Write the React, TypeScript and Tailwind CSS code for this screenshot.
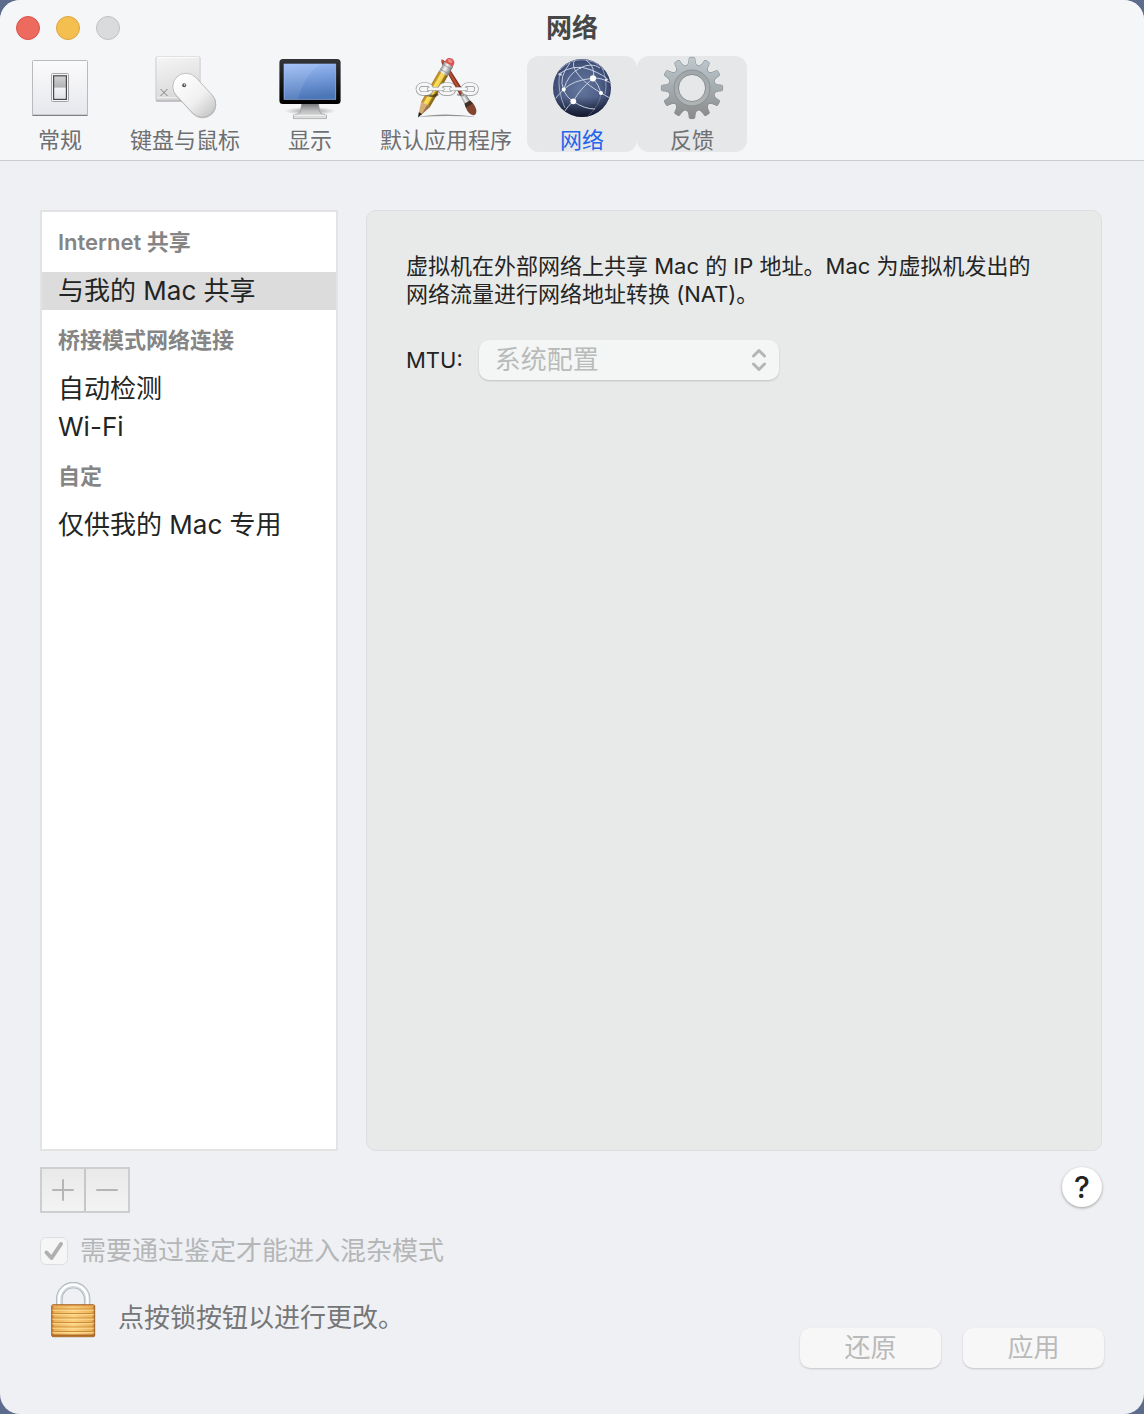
import type { ReactNode } from "react";

const gearTeeth = [0, 30, 60, 90, 120, 150, 180, 210, 240, 270, 300, 330];
const lockStripes = [27, 31.5, 36, 40.5, 45, 49.5];

function SwitchIcon() {
  return (
    <svg viewBox="0 0 64 64" className="size-16" aria-hidden="true">
      <defs>
        <linearGradient id="plate" x1="0" y1="0" x2="0" y2="1">
          <stop offset="0" stopColor="#fbfbfc" />
          <stop offset="1" stopColor="#e6e7ec" />
        </linearGradient>
        <linearGradient id="rocker" x1="0" y1="0" x2="0" y2="1">
          <stop offset="0" stopColor="#d3d3d5" />
          <stop offset="0.48" stopColor="#b2b3b6" />
          <stop offset="0.52" stopColor="#f3f4f7" />
          <stop offset="1" stopColor="#dfe1e6" />
        </linearGradient>
      </defs>
      <rect x="4.5" y="4.5" width="55" height="55" rx="1" fill="url(#plate)" stroke="#b9babd" />
      <path d="M4.5 59.3h55" stroke="#7f8083" strokeWidth="1.2" />
      <rect x="23.5" y="17.5" width="17" height="28" rx="1" fill="#f4f4f4" stroke="#a5a5a7" />
      <rect x="25.6" y="19.8" width="12.8" height="23.6" fill="url(#rocker)" stroke="#4a4a4c" strokeWidth="1.2" />
    </svg>
  );
}

function KeyMouseIcon() {
  return (
    <svg viewBox="0 0 64 64" className="size-16" aria-hidden="true">
      <defs>
        <linearGradient id="key" x1="0" y1="0" x2="0.3" y2="1">
          <stop offset="0" stopColor="#f6f6f6" />
          <stop offset="1" stopColor="#d9d9da" />
        </linearGradient>
        <linearGradient id="mouse" x1="0" y1="0" x2="0" y2="1">
          <stop offset="0" stopColor="#ffffff" />
          <stop offset="0.6" stopColor="#f0f0f0" />
          <stop offset="1" stopColor="#c8c8c8" />
        </linearGradient>
      </defs>
      <rect x="2.8" y="1" width="44.4" height="44.8" rx="1.5" fill="#b4b4b6" />
      <rect x="3" y="0.5" width="44" height="43.5" rx="1.5" fill="url(#key)" stroke="#cbcbcd" strokeWidth="0.8" />
      <path d="M4 1.2h42" stroke="#ffffff" />
      <path d="M4 41.5h42" stroke="#f3f3f3" strokeWidth="0.8" />
      <path d="M7.500 33l7 7M14.500 33l-7 7" stroke="#747476" strokeWidth="0.9" />
      <rect x="28" y="15" width="27" height="50.6" rx="13.5" transform="rotate(-43 41.3 40)" fill="#8f8f8f" opacity="0.5" />
      <rect x="28" y="14" width="26.6" height="50.6" rx="13.3" transform="rotate(-43 41.3 39.3)" fill="url(#mouse)" stroke="#adadad" strokeWidth="0.7" />
      <circle cx="31.2" cy="29.2" r="2" fill="#55565a" />
      <circle cx="31.6" cy="28.9" r="0.8" fill="#e5e5e5" />
    </svg>
  );
}

function DisplayIcon() {
  return (
    <svg viewBox="0 0 64 64" className="size-16" aria-hidden="true">
      <defs>
        <linearGradient id="screen" x1="0" y1="0" x2="0.15" y2="1">
          <stop offset="0" stopColor="#9dbdf8" />
          <stop offset="1" stopColor="#4b76b8" />
        </linearGradient>
        <linearGradient id="stand" x1="0" y1="0" x2="0" y2="1">
          <stop offset="0" stopColor="#707172" />
          <stop offset="0.5" stopColor="#bcbdbe" />
          <stop offset="1" stopColor="#e4e4e4" />
        </linearGradient>
        <linearGradient id="bezel" x1="0" y1="0" x2="0" y2="1">
          <stop offset="0" stopColor="#333536" />
          <stop offset="0.7" stopColor="#0d0d0e" />
          <stop offset="1" stopColor="#000000" />
        </linearGradient>
        <radialGradient id="standShade">
          <stop offset="0" stopColor="#000000" stopOpacity="0.4" />
          <stop offset="1" stopColor="#000000" stopOpacity="0" />
        </radialGradient>
      </defs>
      <ellipse cx="32" cy="55" rx="26" ry="4" fill="url(#standShade)" />
      <path d="M23.800 47h16.600l1 7.500q.4 3 3.200 3.700l3.900 1v3.400h-33v-3.400l3.900-1q2.800-.7 3.300-3.700z" fill="url(#stand)" stroke="#8b8c8d" strokeWidth="0.6" />
      <path d="M16 59.300h32" stroke="#ffffff" strokeWidth="0.8" />
      <rect x="1.4" y="3" width="61.2" height="45" rx="3.5" fill="url(#bezel)" />
      <rect x="6" y="8" width="51.8" height="35.3" fill="url(#screen)" />
      <path d="M6 8h36c-10 7-18 20-22 35.300H6z" fill="#ffffff" opacity="0.09" />
      <rect x="6" y="8" width="51.8" height="35.3" fill="none" stroke="#a6c4ff" strokeWidth="0.6" />
    </svg>
  );
}

function DefaultAppsIcon() {
  return (
    <svg viewBox="0 0 64 64" className="size-16 overflow-visible" aria-hidden="true">
      <defs>
        <linearGradient id="metal" x1="0" y1="0" x2="1" y2="0">
          <stop offset="0" stopColor="#8f9193" />
          <stop offset="0.4" stopColor="#f7f7f7" />
          <stop offset="1" stopColor="#77797b" />
        </linearGradient>
        <linearGradient id="pencil" x1="0" y1="0" x2="1" y2="0">
          <stop offset="0" stopColor="#a8761c" />
          <stop offset="0.25" stopColor="#d9a934" />
          <stop offset="0.32" stopColor="#f9e46a" />
          <stop offset="0.65" stopColor="#f2d247" />
          <stop offset="0.75" stopColor="#a98022" />
          <stop offset="1" stopColor="#7a5a14" />
        </linearGradient>
        <linearGradient id="brush" x1="0" y1="0" x2="1" y2="0">
          <stop offset="0" stopColor="#6d1d0c" />
          <stop offset="0.5" stopColor="#c2563a" />
          <stop offset="1" stopColor="#5e1507" />
        </linearGradient>
      </defs>
      <path d="M4 61q12-2.500 28-2.500t31 2.500q-14-1-29-1t-30 1z" fill="#77797b" opacity="0.8" />
      <g transform="translate(61 59) rotate(-31)">
        <path d="M-2.700-24L-1.800-58q-1-4 1.800-7q2.600 3 1.800 7L2.700-24z" fill="url(#brush)" />
        <path d="M-3.200-15L-2.700-25h5.400l.5 10z" fill="url(#metal)" />
        <path d="M-3.200-15h6.400Q5.500-9 3.700-3.500Q1.500 1-1.500-.5Q-5.500-4-4.200-10z" fill="#84452f" />
        <path d="M-3.200-15h6.400l.9 4h-8.200z" fill="#40302a" />
      </g>
      <g transform="translate(4 61.500) rotate(30)">
        <rect x="-4.600" y="-68" width="9.200" height="12" rx="4.400" fill="#dc5350" />
        <ellipse cx="-.5" cy="-65" rx="2.600" ry="1.700" fill="#f08a84" />
        <rect x="-5" y="-61.500" width="10" height="11.500" fill="url(#metal)" />
        <path d="M-5-58.500h10M-5-53h10" stroke="#808284" strokeWidth="0.6" />
        <path d="M-5.100-15V-50.500H5.100V-15z" fill="url(#pencil)" />
        <path d="M-5.100-15q1.700-2 3.400 0q1.700-2 3.400 0q1.700-2 3.400 0L1.500-4h-3z" fill="#d6ad78" />
        <path d="M1.700-15q1.700-2 3.400 0L1.500-4z" fill="#9d7444" />
        <path d="M-1.900-5h3.800L0 0z" fill="#1c1c1c" />
      </g>
      <path d="M12 38.500q8 3 12-.5" stroke="#2a2413" strokeWidth="2.500" fill="none" opacity="0.6" />
      <path d="M43 38.500l7 1" stroke="#2a1413" strokeWidth="2" fill="none" opacity="0.4" />
      <g fill="none" stroke="#8c8e8f" strokeWidth="4.200">
        <rect x="3.800" y="28.600" width="13.600" height="9" rx="4.500" />
        <rect x="26" y="28.600" width="14" height="9" rx="4.500" />
        <rect x="49" y="28.600" width="13.600" height="9" rx="4.500" />
        <path d="M15 33h13.500M37.500 33H52" strokeLinecap="round" />
      </g>
      <g fill="none" stroke="#f6f6f6" strokeWidth="3">
        <rect x="3.800" y="28.600" width="13.600" height="9" rx="4.500" />
        <rect x="26" y="28.600" width="14" height="9" rx="4.500" />
        <rect x="49" y="28.600" width="13.600" height="9" rx="4.500" />
        <path d="M15 33h13.500M37.500 33H52" strokeLinecap="round" />
      </g>
      <path d="M15 34.600h13.500M37.500 34.600H52" stroke="#a2a4a5" strokeWidth="0.7" />
    </svg>
  );
}

function GlobeIcon() {
  return (
    <svg viewBox="0 0 64 64" className="size-16" aria-hidden="true">
      <defs>
        <radialGradient id="globe" cx="0.48" cy="0.5" r="0.54">
          <stop offset="0" stopColor="#64779e" />
          <stop offset="0.6" stopColor="#4f6089" />
          <stop offset="0.9" stopColor="#3a4870" />
          <stop offset="1" stopColor="#242e50" />
        </radialGradient>
        <linearGradient id="globeShade" x1="0" y1="0" x2="0" y2="1">
          <stop offset="0.65" stopColor="#0b1022" stopOpacity="0" />
          <stop offset="1" stopColor="#0b1022" stopOpacity="0.85" />
        </linearGradient>
        <clipPath id="globeClip">
          <circle cx="32" cy="32" r="28.500" />
        </clipPath>
      </defs>
      <circle cx="32" cy="32" r="29" fill="url(#globe)" />
      <circle cx="32" cy="32" r="29" fill="url(#globeShade)" />
      <g clipPath="url(#globeClip)" fill="none" stroke="#d3dbea" strokeWidth="0.9">
        <path d="M25 4Q21 9 27 17Q34 27 51 37T62 42" />
        <path d="M43 22.300Q49 29 51 37" />
        <path d="M43 22.300Q46 11 36 4" />
        <path d="M8 18.500Q24 7 40 13.500T58 24" />
        <path d="M43 22.300Q50 21 61 27" />
        <path d="M43 22.300Q23 24 13.700 33.500T5 44" />
        <path d="M43 22.300Q30 33 23.300 45.300Q18 50 14 56" />
        <path d="M13.700 33.500Q16 41 23.300 45.300Q34 53 45 53" />
        <path d="M13.700 33.500Q8 22 20 7" />
        <path d="M9.500 18Q7 34 15 52" strokeOpacity="0.7" />
        <path d="M13.700 33.500Q18 18 30 12T50 12" />
        <path d="M51 37Q50 49 38 60" strokeOpacity="0.3" />
        <path d="M52 12q6 12 3 26" strokeOpacity="0.6" />
      </g>
      <circle cx="43" cy="22.300" r="3.100" fill="#ffffff" />
      <circle cx="23.300" cy="45.300" r="2.900" fill="#ffffff" />
      <circle cx="13.700" cy="33.500" r="2" fill="#ffffff" />
      <circle cx="51" cy="37" r="2" fill="#ffffff" />
      <circle cx="56" cy="24" r="1.100" fill="#ffffff" />
      <circle cx="30" cy="12" r="1.100" fill="#d3dbeb" />
      <circle cx="10.500" cy="18.500" r="1.300" fill="#d3dbeb" />
      <path d="M10 14Q19 3.800 32 3.800t22 10.200" fill="none" stroke="#b9c6df" strokeWidth="1" opacity="0.6" />
    </svg>
  );
}

function GearIcon() {
  return (
    <svg viewBox="0 0 64 64" className="size-16" aria-hidden="true">
      <defs>
        <linearGradient id="gear" gradientUnits="userSpaceOnUse" x1="0" y1="1" x2="0" y2="63">
          <stop offset="0" stopColor="#bfcacf" />
          <stop offset="0.5" stopColor="#a5acaf" />
          <stop offset="1" stopColor="#898989" />
        </linearGradient>
        <linearGradient id="gearRing" x1="0" y1="0" x2="0" y2="1">
          <stop offset="0" stopColor="#9fa7aa" />
          <stop offset="1" stopColor="#b0b3b4" />
        </linearGradient>
        <mask id="gearHole">
          <rect width="64" height="64" fill="#ffffff" />
          <circle cx="32" cy="32" r="13.300" fill="#000000" />
        </mask>
        <g id="gearShape">
          <circle cx="32" cy="32" r="23" />
          {gearTeeth.map((angle) => (
            <path key={angle} d="M26.500 10Q28.900 8.500 29.200 2.700Q29.300 1.400 30.400 1.400h3.200Q34.700 1.400 34.800 2.700Q35.100 8.500 37.500 10z" transform={`rotate(${angle} 32 32)`} />
          ))}
        </g>
        <mask id="gearFace">
          <use href="#gearShape" fill="#ffffff" />
        </mask>
      </defs>
      <g mask="url(#gearHole)">
        <use href="#gearShape" fill="#80868a" stroke="#80868a" strokeWidth="0.9" />
        <rect width="64" height="64" fill="url(#gear)" mask="url(#gearFace)" />
        <circle cx="32" cy="32" r="15.500" fill="none" stroke="url(#gearRing)" strokeWidth="4.500" />
        <circle cx="32" cy="32" r="18" fill="none" stroke="#868d90" strokeWidth="0.9" />
      </g>
      <circle cx="32" cy="32" r="13.500" fill="none" stroke="#7d8386" strokeWidth="0.8" />
    </svg>
  );
}

function LockIcon() {
  return (
    <svg viewBox="0 0 46 56" className="h-14 w-[46px]" aria-hidden="true">
      <defs>
        <linearGradient id="brass" x1="0" y1="0" x2="1" y2="0">
          <stop offset="0" stopColor="#b8702a" />
          <stop offset="0.06" stopColor="#eab158" />
          <stop offset="0.5" stopColor="#fbd27f" />
          <stop offset="0.94" stopColor="#eab158" />
          <stop offset="1" stopColor="#a86324" />
        </linearGradient>
      </defs>
      <path d="M9.300 24V17a13.900 13.900 0 0 1 27.800 0V24" fill="none" stroke="#a0a9ae" strokeWidth="6.400" />
      <path d="M9.300 24V17a13.900 13.900 0 0 1 27.800 0V24" fill="none" stroke="#cfd8dd" strokeWidth="5.200" />
      <path d="M9 24V17a14.200 14.200 0 0 1 28.400 0V24" fill="none" stroke="#ffffff" strokeWidth="2.600" />
      <rect x="1.700" y="22.700" width="43" height="32" rx="1.500" fill="url(#brass)" stroke="#9c5c1d" strokeWidth="0.9" />
      {lockStripes.map((y) => (
        <g key={y}>
          <path d={`M2.200 ${y}h42`} stroke="#cb8b38" strokeWidth="1.2" />
          <path d={`M2.200 ${y + 1.2}h42`} stroke="#ffe3a0" strokeWidth="1" opacity="0.8" />
        </g>
      ))}
      <path d="M2.200 53.300h42" stroke="#b06a25" strokeWidth="1.800" />
      <path d="M2.200 23.700h42" stroke="#dd9746" strokeWidth="1.200" />
    </svg>
  );
}

const tabs: { label: string; icon: ReactNode; look: string }[] = [
  { label: "常规", icon: <SwitchIcon />, look: "text-[#6e6f70]" },
  { label: "键盘与鼠标", icon: <KeyMouseIcon />, look: "text-[#6e6f70]" },
  { label: "显示", icon: <DisplayIcon />, look: "text-[#6e6f70]" },
  { label: "默认应用程序", icon: <DefaultAppsIcon />, look: "text-[#6e6f70]" },
  { label: "网络", icon: <GlobeIcon />, look: "bg-[#e6e7e9] text-[#2463eb]" },
  { label: "反馈", icon: <GearIcon />, look: "bg-[#e6e7e9] text-[#6e6f70]" },
];

const groups = [
  { title: "Internet 共享", items: ["与我的 Mac 共享"] },
  { title: "桥接模式网络连接", items: ["自动检测", "Wi-Fi"] },
  { title: "自定", items: ["仅供我的 Mac 专用"] },
];

const selected = "与我的 Mac 共享";

export default function App() {
  return (
    <div className="min-h-screen bg-[#5d6b8d] font-['Inter','Noto_Sans_CJK_SC',sans-serif]" lang="zh-CN">
      <div className="flex min-h-screen flex-col overflow-hidden rounded-[20px] bg-[#eff0f3] text-[#232424]">
        {/* Title bar and toolbar */}
        <header className="border-b border-[#cbccce] bg-[#f5f6f8] pb-2">
          <div className="grid h-14 grid-cols-[1fr_auto_1fr] items-center px-4">
            <div className="flex gap-4">
              <button aria-label="关闭" className="size-6 rounded-full border border-[#d9544b] bg-[#ec6a5e]" />
              <button aria-label="最小化" className="size-6 rounded-full border border-[#dba53c] bg-[#f4bf4f]" />
              <button aria-label="缩放" disabled className="size-6 rounded-full border border-[#bfc0c2] bg-[#dadbdd]" />
            </div>
            <h1 className="text-[26px] leading-8 font-bold text-[#464747]">网络</h1>
          </div>
          <nav className="flex pl-[5px]">
            {tabs.map((tab) => (
              <button
                key={tab.label}
                className={`flex min-w-[110px] flex-col items-center gap-2 rounded-xl px-[15px] text-[22px] leading-6 ${tab.look}`}
              >
                {tab.icon}
                <span>{tab.label}</span>
              </button>
            ))}
          </nav>
        </header>

        {/* Network list and its settings */}
        <main className="flex flex-1 gap-7 pt-[49px] pr-[42px] pl-10">
          <aside className="w-[298px] shrink-0 border-2 border-[#e3e3e4] bg-white">
            {groups.map((group) => (
              <section key={group.title}>
                <h2 className="flex h-[60px] items-center px-4 text-[22px] font-semibold text-[#858585]">{group.title}</h2>
                <ul>
                  {group.items.map((item) => (
                    <li key={item}>
                      <button
                        className={`h-[38px] w-full px-4 text-left text-[26px] leading-[38px] ${item === selected ? "bg-[#dcdcdc]" : ""}`}
                      >
                        {item}
                      </button>
                    </li>
                  ))}
                </ul>
              </section>
            ))}
          </aside>

          <section className="flex-1 rounded-[10px] border border-[#dcdedf] bg-[#e8eae9] px-[39px] py-[41px]">
            <p className="text-[22px] leading-7">
              虚拟机在外部网络上共享 Mac 的 IP 地址。Mac 为虚拟机发出的
              <br />
              网络流量进行网络地址转换 (NAT)。
            </p>
            <div className="mt-8 flex items-center gap-4">
              <label htmlFor="mtu" className="text-[22px]">MTU:</label>
              <div className="relative">
                <select
                  id="mtu"
                  disabled
                  className="h-10 w-[300px] appearance-none rounded-[10px] bg-[#f4f6f5] px-4 text-[26px] leading-10 text-[#b9bbba] opacity-100 shadow-[0_1px_2px_rgba(0,0,0,0.18)]"
                >
                  <option>系统配置</option>
                </select>
                <svg viewBox="0 0 16 24" className="pointer-events-none absolute top-2 right-3 h-6 w-4" fill="none" stroke="#b4b6b5" strokeWidth="3" strokeLinecap="round" strokeLinejoin="round" aria-hidden="true">
                  <path d="M2.500 8L8 2.500L13.500 8M2.500 16L8 21.500L13.500 16" />
                </svg>
              </div>
            </div>
          </section>
        </main>

        <footer className="pt-4 pr-10 pb-[46px] pl-10">
          <div className="flex items-start justify-between">
            <div className="flex h-[46px] w-[90px] divide-x-2 divide-[#c6c7c8] border-2 border-[#cdcecf] bg-linear-to-b from-[#e9e9e9] to-[#f3f3f3]">
              <button disabled aria-label="添加" className="flex flex-1 items-center justify-center">
                <svg viewBox="0 0 22 22" className="size-[22px]" stroke="#b5b5b5" strokeWidth="2" strokeLinecap="round" aria-hidden="true">
                  <path d="M11 1v20M1 11h20" />
                </svg>
              </button>
              <button disabled aria-label="移除" className="flex flex-1 items-center justify-center">
                <svg viewBox="0 0 22 22" className="size-[22px]" stroke="#b5b5b5" strokeWidth="2" strokeLinecap="round" aria-hidden="true">
                  <path d="M1 11h20" />
                </svg>
              </button>
            </div>
            <button
              aria-label="帮助"
              className="mr-0.5 size-10 rounded-full bg-white text-[30px] leading-10 font-medium shadow-[0_1px_3px_rgba(0,0,0,0.35)]"
            >
              ?
            </button>
          </div>

          <label className="mt-6 flex h-7 items-center gap-3 text-[26px] leading-7 text-[#b5b6b7]">
            <span className="relative flex">
              <input type="checkbox" checked disabled readOnly className="size-7 appearance-none rounded-md border border-[#dddedf] bg-[#f6f6f6]" />
              <svg viewBox="0 0 28 28" className="pointer-events-none absolute inset-0 size-7" fill="none" stroke="#b0b0b0" strokeWidth="4" strokeLinecap="round" strokeLinejoin="round" aria-hidden="true">
                <path d="M6.500 15.500L11.500 21L21 7" />
              </svg>
            </span>
            需要通过鉴定才能进入混杂模式
          </label>

          <div className="mt-[17px] flex items-start justify-between">
            <div className="flex items-center">
              <button aria-label="锁" className="ml-2.5">
                <LockIcon />
              </button>
              <p className="pt-4 pl-[22px] text-[26px] leading-10 text-[#757677]">点按锁按钮以进行更改。</p>
            </div>
            <div className="mt-[46px] flex gap-[22px]">
              <button disabled className="h-10 w-[141px] rounded-[10px] bg-[#f7f7f7] text-[26px] leading-10 text-[#bababa] shadow-[0_1px_2px_rgba(0,0,0,0.18)]">还原</button>
              <button disabled className="h-10 w-[141px] rounded-[10px] bg-[#f7f7f7] text-[26px] leading-10 text-[#bababa] shadow-[0_1px_2px_rgba(0,0,0,0.18)]">应用</button>
            </div>
          </div>
        </footer>
      </div>
    </div>
  );
}
